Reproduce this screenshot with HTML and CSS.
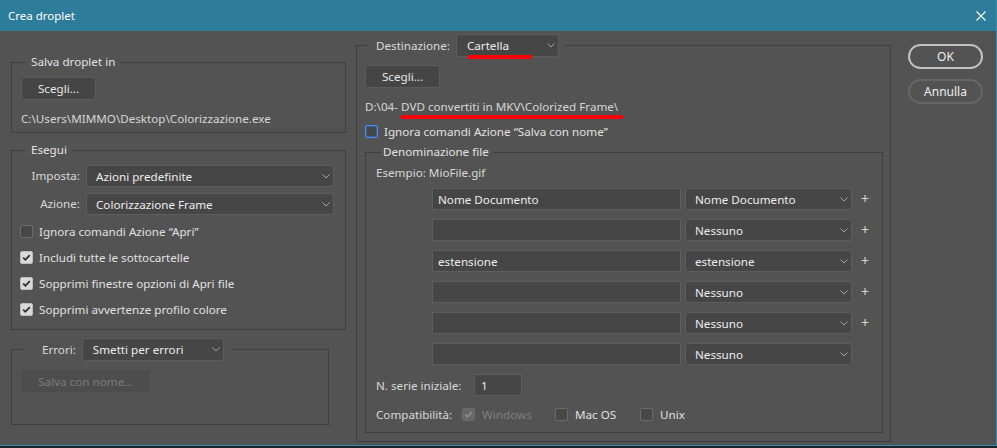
FILE: index.html
```html
<!DOCTYPE html>
<html lang="it">
<head>
<meta charset="utf-8">
<title>Crea droplet</title>
<link rel="stylesheet" href="styles.css">
</head>
<body>
<div class="dialog">
  <header class="titlebar">
    <span class="title">Crea droplet</span>
    <svg class="close" width="10" height="10" viewBox="0 0 10 10"><path d="M0.5 0.5L9.5 9.5M9.5 0.5L0.5 9.5" stroke="#ffffff" stroke-width="1.1" fill="none"/></svg>
  </header>
  <div class="content">
    <div class="left">
      <fieldset class="group g-save">
        <legend class="legend">Salva droplet in</legend>
        <button class="btn btn-choose">Scegli...</button>
        <div class="path">C:\Users\MIMMO\Desktop\Colorizzazione.exe</div>
      </fieldset>

      <fieldset class="group g-run">
        <legend class="legend">Esegui</legend>
        <div class="form-grid">
          <span class="lbl">Imposta:</span>
          <div class="select"><span>Azioni predefinite</span><svg class="chev" width="8" height="5" viewBox="0 0 8 5"><path d="M0.5 0.5L4 4L7.5 0.5" stroke="#a3a3a3" fill="none"/></svg></div>
          <span class="lbl">Azione:</span>
          <div class="select"><span>Colorizzazione Frame</span><svg class="chev" width="8" height="5" viewBox="0 0 8 5"><path d="M0.5 0.5L4 4L7.5 0.5" stroke="#a3a3a3" fill="none"/></svg></div>
        </div>
        <div class="checks">
          <div class="check"><span class="box"></span><span>Ignora comandi Azione “Apri”</span></div>
          <div class="check"><span class="box checked"><svg width="13" height="13" viewBox="0 0 13 13"><path d="M3.2 6.6L5.4 8.8L9.8 4.2" stroke="#2e2e2e" stroke-width="1.8" fill="none"/></svg></span><span>Includi tutte le sottocartelle</span></div>
          <div class="check"><span class="box checked"><svg width="13" height="13" viewBox="0 0 13 13"><path d="M3.2 6.6L5.4 8.8L9.8 4.2" stroke="#2e2e2e" stroke-width="1.8" fill="none"/></svg></span><span>Sopprimi finestre opzioni di Apri file</span></div>
          <div class="check"><span class="box checked"><svg width="13" height="13" viewBox="0 0 13 13"><path d="M3.2 6.6L5.4 8.8L9.8 4.2" stroke="#2e2e2e" stroke-width="1.8" fill="none"/></svg></span><span>Sopprimi avvertenze profilo colore</span></div>
        </div>
      </fieldset>

      <fieldset class="group g-err">
        <legend class="legend legend-ctl legend-err">
          <span class="lbl">Errori:</span>
          <div class="select select-err"><span>Smetti per errori</span><svg class="chev" width="8" height="5" viewBox="0 0 8 5"><path d="M0.5 0.5L4 4L7.5 0.5" stroke="#a3a3a3" fill="none"/></svg></div>
        </legend>
        <button class="btn btn-disabled" disabled>Salva con nome...</button>
      </fieldset>
    </div>

    <fieldset class="group g-dest">
      <legend class="legend legend-ctl legend-dest">
        <span class="lbl">Destinazione:</span>
        <div class="select select-dest"><span>Cartella</span><svg class="chev" width="8" height="5" viewBox="0 0 8 5"><path d="M0.5 0.5L4 4L7.5 0.5" stroke="#a3a3a3" fill="none"/></svg><span class="redmark redmark-sel"></span></div>
      </legend>
      <button class="btn btn-choose">Scegli...</button>
      <div class="path path-dest">D:\04- <span class="marked">DVD convertiti in MKV\Colorized Frame\<span class="redmark redmark-path"></span></span></div>
      <div class="check check-dest"><span class="box focus"></span><span>Ignora comandi Azione “Salva con nome”</span></div>

      <fieldset class="group g-name">
        <legend class="legend legend-name">Denominazione file</legend>
        <div class="example">Esempio: MioFile.gif</div>
        <div class="rows">
          <div class="field">Nome Documento</div>
          <div class="select"><span>Nome Documento</span><svg class="chev" width="8" height="5" viewBox="0 0 8 5"><path d="M0.5 0.5L4 4L7.5 0.5" stroke="#a3a3a3" fill="none"/></svg></div>
          <span class="plus">+</span>

          <div class="field"></div>
          <div class="select"><span>Nessuno</span><svg class="chev" width="8" height="5" viewBox="0 0 8 5"><path d="M0.5 0.5L4 4L7.5 0.5" stroke="#a3a3a3" fill="none"/></svg></div>
          <span class="plus">+</span>

          <div class="field">estensione</div>
          <div class="select"><span>estensione</span><svg class="chev" width="8" height="5" viewBox="0 0 8 5"><path d="M0.5 0.5L4 4L7.5 0.5" stroke="#a3a3a3" fill="none"/></svg></div>
          <span class="plus">+</span>

          <div class="field"></div>
          <div class="select"><span>Nessuno</span><svg class="chev" width="8" height="5" viewBox="0 0 8 5"><path d="M0.5 0.5L4 4L7.5 0.5" stroke="#a3a3a3" fill="none"/></svg></div>
          <span class="plus">+</span>

          <div class="field"></div>
          <div class="select"><span>Nessuno</span><svg class="chev" width="8" height="5" viewBox="0 0 8 5"><path d="M0.5 0.5L4 4L7.5 0.5" stroke="#a3a3a3" fill="none"/></svg></div>
          <span class="plus">+</span>

          <div class="field"></div>
          <div class="select"><span>Nessuno</span><svg class="chev" width="8" height="5" viewBox="0 0 8 5"><path d="M0.5 0.5L4 4L7.5 0.5" stroke="#a3a3a3" fill="none"/></svg></div>
          <span class="plus"></span>
        </div>
        <div class="serie">
          <span class="serie-lbl">N. serie iniziale:</span>
          <div class="field field-num">1</div>
        </div>
        <div class="compat">
          <span class="compat-lbl">Compatibilità:</span>
          <span class="opt opt-win"><span class="box disabled-checked"><svg width="13" height="13" viewBox="0 0 13 13"><path d="M3.2 6.6L5.4 8.8L9.8 4.2" stroke="#8c8c8c" stroke-width="1.8" fill="none"/></svg></span><span class="dim">Windows</span></span>
          <span class="opt opt-mac"><span class="box"></span><span>Mac OS</span></span>
          <span class="opt"><span class="box"></span><span>Unix</span></span>
        </div>
      </fieldset>
    </fieldset>

    <div class="actions">
      <button class="pill pill-ok">OK</button>
      <button class="pill pill-cancel">Annulla</button>
    </div>
  </div>
</div>
</body>
</html>
```

FILE: styles.css
```css
* { box-sizing: border-box; }
html, body { margin: 0; padding: 0; }
body {
  width: 997px;
  height: 448px;
  overflow: hidden;
  background: #1c2326;
  font-family: "Noto Sans", "Open Sans", sans-serif;
  font-size: 11.65px;
  color: #dedede;
}
.dialog {
  width: 997px;
  height: 446px;
  background: #535353;
  border-right: 1px solid #3a8cad;
  border-bottom: 1px solid #3a8cad;
  display: flex;
  flex-direction: column;
}
.titlebar {
  height: 31px;
  flex: none;
  background: #2d7c99;
  display: flex;
  align-items: center;
  justify-content: space-between;
  padding: 0 10px 0 8px;
  color: #ffffff;
}
.title { font-size: 11.5px; }
.close { display: block; }

.content { display: flex; align-items: flex-start; }
.left {
  width: 346px;
  flex: none;
  padding: 23px 0 0 11px;
  display: flex;
  flex-direction: column;
  align-items: flex-start;
}

/* group boxes */
.group {
  margin: 0;
  min-width: 0;
  padding: 0;
  border: 1px solid #3e3e3e;
}
.legend {
  margin-left: 4px;
  padding: 0 5px 0 6px;
  height: 16px;
  line-height: 16px;
  color: #e2e2e2;
}
.legend-ctl {
  display: flex;
  align-items: center;
  height: 23px;
  margin-bottom: -7px;
  gap: 6px;
}
.legend-err { padding: 0 7px 0 17px; }
.legend-dest { padding: 0 6px 0 7px; }
.legend-name { margin-left: 5px; padding: 0 4px 0 2px; }

.g-save { width: 335px; padding: 7px 10px 5px 9px; }
.g-run { width: 335px; margin-top: 9px; padding: 7px 11px 7px 9px; }
.g-err { width: 318px; margin-top: 8px; padding: 15px 9px 31px 9px; }
.g-dest { width: 535px; flex: none; margin: 3px 0 0 10px; padding: 15px 7px 8px 8px; }
.g-name { width: 518px; margin-top: 5px; padding: 5px 10px 10px 10px; }

/* controls */
.btn {
  display: block;
  margin: 0;
  font: inherit;
  color: #e6e6e6;
  background: #454545;
  border: 1px solid #5b5b5b;
  border-radius: 3px;
  padding: 0;
}
.btn-choose { width: 75px; height: 23px; }
.btn-disabled {
  width: 130px;
  height: 24px;
  background: #4d4d4d;
  border-color: #525252;
  color: #7b7b7b;
}
.path { margin-top: 11px; line-height: 16px; color: #d6d6d6; white-space: nowrap; }

.select {
  position: relative;
  display: flex;
  align-items: center;
  justify-content: space-between;
  height: 22px;
  padding: 0 3px 0 9px;
  background: #464646;
  border: 1px solid #5d5d5d;
  border-radius: 3px;
  color: #ececec;
  white-space: nowrap;
}
.chev { display: block; flex: none; }
.select-err { width: 142px; height: 23px; padding-left: 10px; }
.select-dest { width: 103px; height: 23px; padding-left: 10px; }

.form-grid {
  display: grid;
  grid-template-columns: 59px 1fr;
  column-gap: 6px;
  row-gap: 6px;
}
.lbl { text-align: right; line-height: 22px; color: #d8d8d8; white-space: nowrap; }

.checks { margin-top: 3px; }
.check {
  display: flex;
  align-items: center;
  gap: 6px;
  height: 26px;
  margin-left: -1px;
  color: #e0e0e0;
}
.box {
  flex: none;
  width: 13px;
  height: 13px;
  border: 1px solid #6c6c6c;
  border-radius: 2px;
  background: #474747;
  display: flex;
  align-items: center;
  justify-content: center;
}
.box svg { display: block; margin: -1px; }
.box.checked { background: #d9d9d9; border-color: #bcbcbc; }
.box.focus {
  border: 1px solid #4a8cf5;
  box-shadow: inset 0 0 0 1px rgba(58, 112, 200, 0.6);
}
.box.disabled-checked { background: #666666; border-color: #6a6a6a; }

/* annotation marks */
.redmark { position: absolute; background: #ff0000; height: 4px; }
.redmark-sel { left: 11px; top: 20px; width: 64px; }
.marked { position: relative; }
.redmark-path { left: 0; top: calc(100% + 1px); width: 222px; }

.path-dest { margin-top: 11px; }
.check-dest { height: 16px; margin: 8px 0 0 0; }

.example { line-height: 16px; color: #d8d8d8; }
.rows {
  margin: 7px 0 0 56px;
  display: grid;
  grid-template-columns: 249px 167px 18px;
  grid-auto-rows: 22px;
  column-gap: 4px;
  row-gap: 9px;
}
.field {
  display: flex;
  align-items: center;
  padding-left: 5px;
  background: #464646;
  border: 1px solid #5d5d5d;
  color: #ececec;
}
.plus { text-align: center; line-height: 22px; font-size: 14px; color: #d4d4d4; }

.serie { margin-top: 9px; display: flex; align-items: center; height: 22px; }
.serie-lbl { width: 98px; color: #d8d8d8; }
.field-num { width: 48px; height: 22px; padding-left: 6px; }

.compat { margin-top: 10px; display: flex; align-items: center; height: 16px; color: #e0e0e0; }
.compat-lbl { width: 86px; color: #d8d8d8; }
.opt { display: flex; align-items: center; gap: 7px; }
.opt-win { width: 93px; }
.opt-mac { width: 85px; }
.dim { color: #7e7e7e; }

.actions {
  margin: 13px 0 0 17px;
  display: flex;
  flex-direction: column;
  gap: 10px;
}
.pill {
  width: 75px;
  height: 25px;
  margin: 0;
  padding: 0;
  font: inherit;
  font-size: 12px;
  color: #eeeeee;
  background: #535353;
  border-radius: 13px;
}
.pill-ok { border: 2px solid #c2c2c2; }
.pill-cancel { border: 2px solid #666666; }
```
